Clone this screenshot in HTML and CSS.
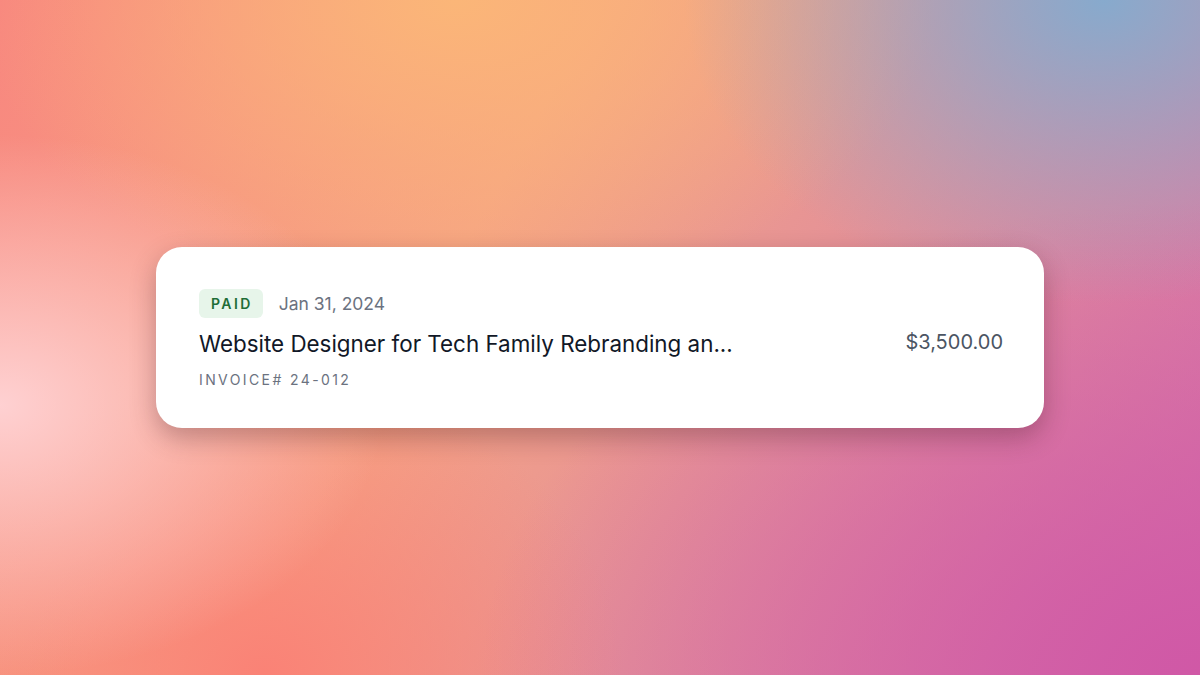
FILE: index.html
```html
<!DOCTYPE html>
<html lang="en">
<head>
    <meta charset="UTF-8">
    <meta name="viewport" content="width=device-width, initial-scale=1.0">
    <title>Invoice</title>
    <link rel="stylesheet" href="styles.css">
</head>
<body>

    <div class="invoice-card">
        <div class="invoice-info">
            <div class="invoice-meta">
                <span class="status-badge">PAID</span>
                <span class="invoice-date">Jan 31, 2024</span>
            </div>
            <h2 class="invoice-title">Website Designer for Tech Family Rebranding an...</h2>
            <div class="invoice-number">INVOICE# 24-012</div>
        </div>
        <div class="invoice-amount">$3,500.00</div>
    </div>

</body>
</html>
```

FILE: styles.css
```css
html, body {
    height: 100%;
}

body {
    margin: 0;
    font-family: Inter, "Liberation Sans", Arial, sans-serif;
    display: flex;
    justify-content: center;
    align-items: center;
    background-color: #f29a88;
    background-image:
        radial-gradient(ellipse 32% 40% at 0% 60%, rgba(255, 212, 214, 0.95) 0%, rgba(255, 212, 214, 0) 100%),
        radial-gradient(ellipse 35% 45% at 92% 0%, rgba(135, 170, 205, 1) 0%, rgba(135, 170, 205, 0) 100%),
        radial-gradient(ellipse 40% 45% at 38% 0%, rgba(251, 182, 120, 1) 0%, rgba(251, 182, 120, 0) 100%),
        radial-gradient(ellipse 60% 70% at 100% 100%, rgba(208, 88, 166, 1) 0%, rgba(208, 88, 166, 0) 100%),
        radial-gradient(ellipse 30% 45% at 22% 100%, rgba(250, 130, 118, 1) 0%, rgba(250, 130, 118, 0) 100%),
        linear-gradient(120deg, #f8877f 0%, #f6a384 38%, #e39099 65%, #d470aa 100%);
}

.invoice-card {
    width: 888px;
    box-sizing: border-box;
    padding: 42px 41px 38px 43px;
    background-color: #fff;
    border-radius: 26px;
    box-shadow: 0 10px 26px rgba(60, 20, 30, 0.3);
    display: flex;
    align-items: center;
    justify-content: space-between;
    gap: 40px;
}

.invoice-info {
    min-width: 0;
}

.invoice-meta {
    display: flex;
    align-items: center;
    gap: 16px;
}

.status-badge {
    background-color: #e7f5ea;
    color: #1f6d37;
    font-size: 14px;
    font-weight: 600;
    letter-spacing: 2.4px;
    padding: 6px 10px 6px 12px;
    border-radius: 6px;
    line-height: 17px;
}

.invoice-date {
    color: #6b7280;
    font-size: 17.5px;
}

.invoice-title {
    margin: 11px 0 0;
    font-size: 22.4px;
    font-weight: 400;
    line-height: 30px;
    color: #111827;
    white-space: nowrap;
}

.invoice-number {
    margin-top: 11px;
    font-size: 14px;
    letter-spacing: 2.4px;
    color: #6b7280;
    line-height: 20px;
}

.invoice-amount {
    padding-top: 4px;
    font-size: 20px;
    color: #4b5563;
    white-space: nowrap;
}
```
